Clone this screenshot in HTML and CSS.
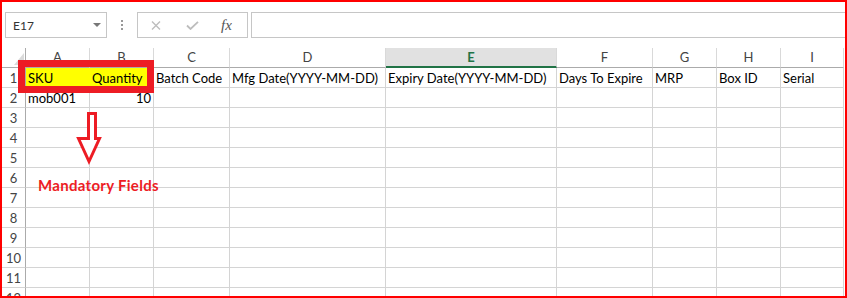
FILE: index.html
```html
<!DOCTYPE html>
<html lang="en">
<head>
    <meta charset="UTF-8">
    <title>Product Upload Template</title>
    <link rel="stylesheet" href="styles.css">
</head>
<body>
    <div class="frame">
        <div class="toolbar">
            <div class="namebox"><span>E17</span><span class="caret"></span></div>
            <div class="grip"><i></i><i></i><i></i></div>
            <div class="fxbox">
                <svg class="btn-x" width="10" height="9" viewBox="0 0 10 9"><path d="M1 0.5 L9 8.5 M9 0.5 L1 8.5" stroke="#bdbdbd" stroke-width="1.4" fill="none"/></svg>
                <svg class="btn-ok" width="13" height="9" viewBox="0 0 13 9"><path d="M1 4.5 L4.5 8 L12 0.8" stroke="#bdbdbd" stroke-width="1.8" fill="none"/></svg>
                <span class="fx">fx</span>
            </div>
            <div class="formula"></div>
        </div>

        <div class="sheet">
            <div class="corner"><span class="tri"></span></div>
            <div class="colhead">A</div>
            <div class="colhead">B</div>
            <div class="colhead">C</div>
            <div class="colhead">D</div>
            <div class="colhead selected">E</div>
            <div class="colhead">F</div>
            <div class="colhead">G</div>
            <div class="colhead">H</div>
            <div class="colhead">I</div>

            <div class="rowhead">1</div>
            <div class="cell fill joined">SKU</div>
            <div class="cell fill">Quantity</div>
            <div class="cell">Batch Code</div>
            <div class="cell">Mfg Date(YYYY-MM-DD)</div>
            <div class="cell">Expiry Date(YYYY-MM-DD)</div>
            <div class="cell">Days To Expire</div>
            <div class="cell">MRP</div>
            <div class="cell">Box ID</div>
            <div class="cell">Serial</div>

            <div class="rowhead">2</div>
            <div class="cell">mob001</div>
            <div class="cell num">10</div>
            <div class="cell"></div><div class="cell"></div><div class="cell"></div><div class="cell"></div><div class="cell"></div><div class="cell"></div><div class="cell"></div>

            <div class="rowhead">3</div>
            <div class="cell"></div><div class="cell"></div><div class="cell"></div><div class="cell"></div><div class="cell"></div><div class="cell"></div><div class="cell"></div><div class="cell"></div><div class="cell"></div>
            <div class="rowhead">4</div>
            <div class="cell"></div><div class="cell"></div><div class="cell"></div><div class="cell"></div><div class="cell"></div><div class="cell"></div><div class="cell"></div><div class="cell"></div><div class="cell"></div>
            <div class="rowhead">5</div>
            <div class="cell"></div><div class="cell"></div><div class="cell"></div><div class="cell"></div><div class="cell"></div><div class="cell"></div><div class="cell"></div><div class="cell"></div><div class="cell"></div>
            <div class="rowhead">6</div>
            <div class="cell"></div><div class="cell"></div><div class="cell"></div><div class="cell"></div><div class="cell"></div><div class="cell"></div><div class="cell"></div><div class="cell"></div><div class="cell"></div>
            <div class="rowhead">7</div>
            <div class="cell"></div><div class="cell"></div><div class="cell"></div><div class="cell"></div><div class="cell"></div><div class="cell"></div><div class="cell"></div><div class="cell"></div><div class="cell"></div>
            <div class="rowhead">8</div>
            <div class="cell"></div><div class="cell"></div><div class="cell"></div><div class="cell"></div><div class="cell"></div><div class="cell"></div><div class="cell"></div><div class="cell"></div><div class="cell"></div>
            <div class="rowhead">9</div>
            <div class="cell"></div><div class="cell"></div><div class="cell"></div><div class="cell"></div><div class="cell"></div><div class="cell"></div><div class="cell"></div><div class="cell"></div><div class="cell"></div>
            <div class="rowhead">10</div>
            <div class="cell"></div><div class="cell"></div><div class="cell"></div><div class="cell"></div><div class="cell"></div><div class="cell"></div><div class="cell"></div><div class="cell"></div><div class="cell"></div>
            <div class="rowhead">11</div>
            <div class="cell"></div><div class="cell"></div><div class="cell"></div><div class="cell"></div><div class="cell"></div><div class="cell"></div><div class="cell"></div><div class="cell"></div><div class="cell"></div>
            <div class="rowhead">12</div>
            <div class="cell"></div><div class="cell"></div><div class="cell"></div><div class="cell"></div><div class="cell"></div><div class="cell"></div><div class="cell"></div><div class="cell"></div><div class="cell"></div>
        </div>

        <!-- annotation drawn over the sheet -->
        <div class="mark"></div>
        <svg class="arrow" width="26" height="56" viewBox="0 0 26 56">
            <polygon points="12.5,3.5 19.5,3.5 19.5,28.5 23.5,28.5 13,51.5 2.5,28.5 12.5,28.5" fill="#fff" stroke="#ed1c24" stroke-width="3" stroke-linejoin="miter"/>
        </svg>
        <div class="note">Mandatory Fields</div>
    </div>
</body>
</html>
```

FILE: styles.css
```css
* {
    margin: 0;
    box-sizing: border-box;
}

body {
    font-family: Lato, 'Liberation Sans', sans-serif;
    background-color: #fff;
}

.frame {
    position: relative;
    width: 847px;
    height: 298px;
    border: 2px solid #f00;
    overflow: hidden;
    background-color: #fff;
}

/* formula bar */
.toolbar {
    display: flex;
    align-items: flex-start;
    height: 46px;
    padding: 10px 0 0 3px;
}

.namebox {
    width: 102px;
    height: 26px;
    border: 1px solid #c6c6c6;
    display: flex;
    align-items: center;
    justify-content: space-between;
    padding: 0 5px 0 7px;
    font-size: 12px;
    color: #333;
}

.caret {
    width: 0;
    height: 0;
    border-left: 4px solid transparent;
    border-right: 4px solid transparent;
    border-top: 4px solid #777;
}

.grip {
    display: flex;
    flex-direction: column;
    gap: 2px;
    margin: 8px 14px 0 14px;
}

.grip i {
    display: block;
    width: 2px;
    height: 2px;
    background-color: #999;
}

.fxbox {
    width: 111px;
    height: 26px;
    border: 1px solid #c6c6c6;
    display: flex;
    align-items: center;
    padding-left: 13px;
}

.btn-ok {
    margin-left: 25px;
}

.fx {
    margin-left: 22px;
    font-family: 'Liberation Serif', serif;
    font-style: italic;
    font-size: 15px;
    color: #555;
}

.formula {
    flex: 1;
    height: 26px;
    margin-left: 3px;
    border: 1px solid #c6c6c6;
    border-right: none;
}

/* grid */
.sheet {
    display: grid;
    grid-template-columns: 24px 64px 64px 76px 156px 171px 96px 64px 64px 63px;
    grid-auto-rows: 20px;
    font-size: 13px;
}

.corner {
    display: flex;
    align-items: flex-end;
    justify-content: flex-end;
    border-right: 1px solid #ababab;
    border-bottom: 1px solid #ababab;
    padding: 0 1px 2px 0;
}

.tri {
    width: 10px;
    height: 12px;
    background-color: #dadada;
    clip-path: polygon(100% 0, 100% 100%, 0 100%);
}

.colhead {
    text-align: center;
    line-height: 18px;
    color: #444;
    border-right: 1px solid #d9d9d9;
    border-bottom: 1px solid #ababab;
}

.colhead.selected {
    background-color: #e1e1e1;
    color: #217346;
    font-weight: bold;
    border-bottom: 2px solid #217346;
}

.rowhead {
    text-align: center;
    line-height: 20px;
    color: #444;
    border-right: 1px solid #ababab;
    border-bottom: 1px solid #d4d4d4;
}

.cell {
    line-height: 20px;
    padding: 0 2px;
    white-space: nowrap;
    color: #000;
    border-right: 1px solid #d4d4d4;
    border-bottom: 1px solid #d4d4d4;
}

.cell.num {
    text-align: right;
}

.cell.fill {
    background-color: #ff0;
}

.cell.joined {
    border-right-color: #ff0;
}

/* annotation */
.mark {
    position: absolute;
    left: 16px;
    top: 58px;
    width: 136px;
    height: 33px;
    border: 7px solid #ed1c24;
}

.arrow {
    position: absolute;
    left: 74px;
    top: 108px;
}

.note {
    position: absolute;
    left: 36px;
    top: 176px;
    font-size: 15px;
    line-height: 15px;
    font-weight: bold;
    letter-spacing: 0.3px;
    color: #ed1c24;
}
```
